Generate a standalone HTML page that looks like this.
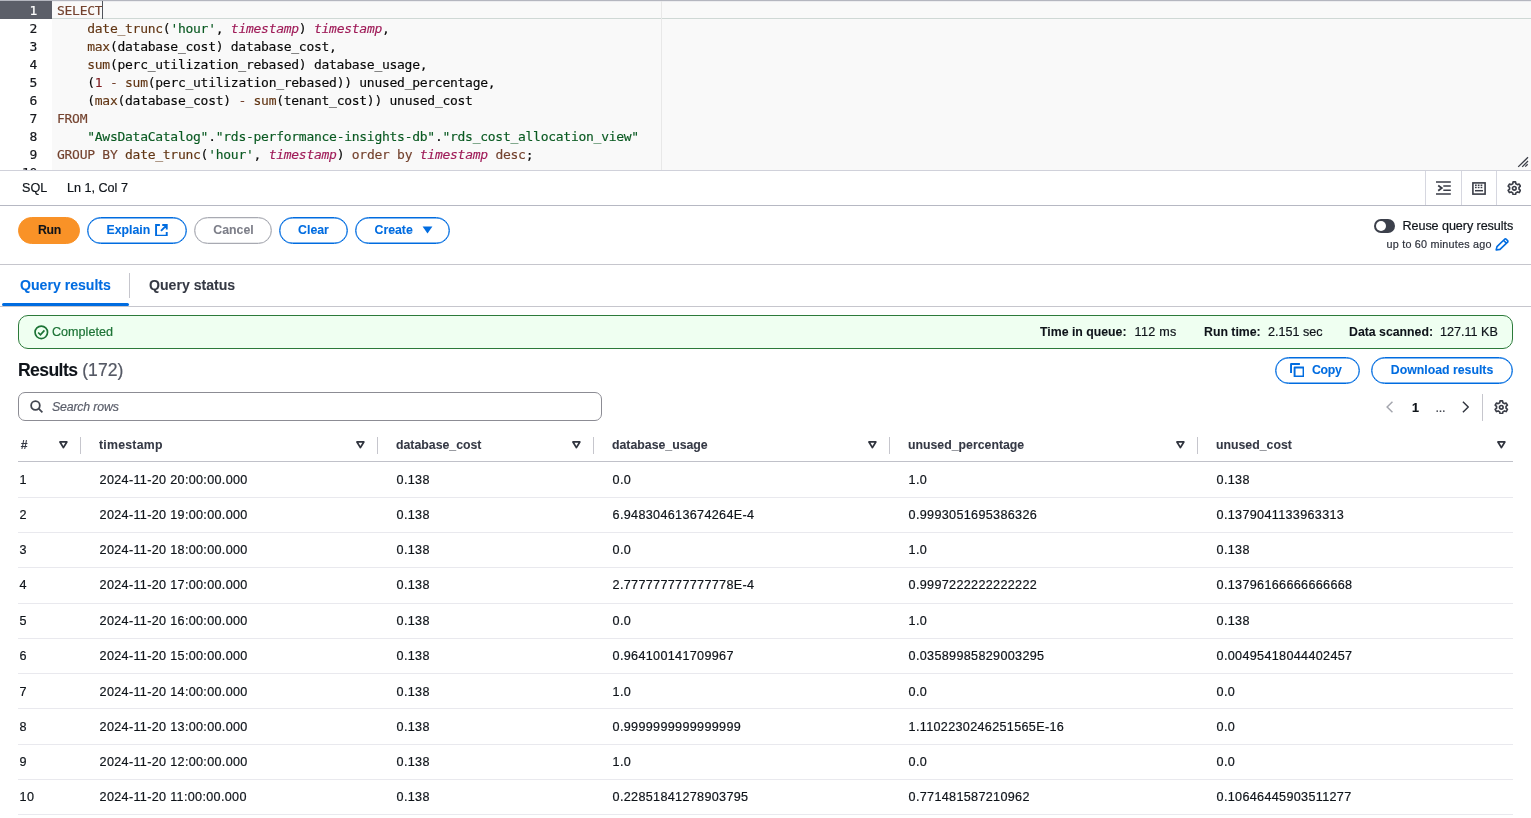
<!DOCTYPE html>
<html lang="en">
<head>
<meta charset="utf-8">
<title>Query editor</title>
<style>
*{box-sizing:border-box;margin:0;padding:0}
html,body{width:1531px;height:818px;overflow:hidden;background:#fff}
body{font-family:"Liberation Sans","DejaVu Sans",sans-serif;font-size:12.6px;line-height:18px;color:#0f141a;position:relative;-webkit-text-stroke:0.2px currentColor}
.abs{position:absolute}
/* editor */
#topline{left:0;top:0;width:1531px;height:1px;background:#b4b6bf}
#editor{left:0;top:1px;width:1531px;height:169px;background:#f9f9f9;overflow:hidden}
#gutter{left:0;top:0;width:52px;height:169px;background:#fff}
#gutter div{height:18px;line-height:20px;text-align:right;padding-right:15px;color:#16181d}
#gutter div.act{background:#5c5f69;color:#fff}
#code,#gutter{font-family:"DejaVu Sans Mono","Liberation Mono",monospace;font-size:13px;letter-spacing:-0.27px;line-height:18px}
#code{-webkit-text-stroke:0.15px currentColor;left:57px;top:1px;white-space:pre;color:#080808}
#code div{height:18px}
#actline{left:52px;top:0;width:1479px;height:18px;border-bottom:1px solid #cfd8d5;border-top:1px solid #ededf0}
#pmargin{left:661px;top:0;width:1px;height:169px;background:#e8e8e8}
#cursor{left:101.6px;top:0;width:1.4px;height:18px;background:#50535b}
.k{color:#74432f}.f{color:#623614}.s{color:#0a5a22}.t{color:#9f1b58;font-style:italic}.n{color:#811f24}
#edborder{left:0;top:170px;width:1531px;height:1px;background:#d0d1da}
/* status bar */
#status{left:0;top:171px;width:1531px;height:34px;background:#fff}
#statborder{left:0;top:205px;width:1531px;height:1px;background:#b6b8c3}
.btn,b,th,.tab{-webkit-text-stroke:0.08px currentColor}
.vsep{width:1px;background:#d6d7e0}
/* buttons */
.btn{position:absolute;height:27px;border-radius:14px;border:1px solid #006ce0;box-shadow:inset 0 0 0 0.4px #006ce0;color:#006ce0;font-weight:bold;font-size:12.3px;line-height:24px;text-align:center;white-space:nowrap;background:#fff}
.btn.primary{background:#f99227;border-color:#f99227;color:#0f141a;box-shadow:none}
.btn.dis{border-color:#a8aab2;color:#7d7f89;box-shadow:inset 0 0 0 0.3px #a8aab2}
#toolborder{left:0;top:264px;width:1531px;height:1px;background:#c6c6cd}
/* tabs */
#tabborder{left:0;top:306px;width:1531px;height:1px;background:#c6c6cd}
.tab{font-weight:bold;font-size:14.1px;line-height:20px}
/* flash */
#flash b{font-size:12.3px}
#flash{left:18px;top:315px;width:1495px;height:34px;border:1px solid #2c7a3a;border-radius:10px;background:#effff1}
/* table */
table{border-collapse:collapse;table-layout:fixed;position:absolute;left:18px;top:427px;width:1495px}
th{color:#353945;height:34px;text-align:left;font-weight:bold;font-size:12.3px;position:relative;border-bottom:1px solid #c0c1c9;padding:2px 0 0 19px;white-space:nowrap}
td{height:35.25px;padding:1px 0 0 19.6px;border-bottom:1px solid #e9e9ee;white-space:nowrap;letter-spacing:0.33px}
tbody tr:first-child td{height:36.25px;padding-top:2px}
th:first-child,td:first-child{padding-left:1.6px}
th:first-child{padding-left:2.8px}
tbody tr:nth-child(3) td,tbody tr:nth-child(4) td{padding-top:0;padding-bottom:1px}
th .sort{position:absolute;right:12px;top:13.9px;width:8.8px;height:7.8px}
th:last-child .sort{right:7.4px}
th .sep{position:absolute;left:0;top:10px;width:1px;height:17px;background:#c6c6cd}
</style>
</head>
<body>
<div id="root" style="position:absolute;left:0;top:0;width:1531px;height:818px;will-change:transform">
<div id="topline" class="abs"></div>
<div id="editor" class="abs">
  <div id="actline" class="abs"></div>
  <div id="pmargin" class="abs"></div>
  <div id="gutter" class="abs"><div class="act">1</div><div>2</div><div>3</div><div>4</div><div>5</div><div>6</div><div>7</div><div>8</div><div>9</div><div>10</div></div>
  <div id="code" class="abs"><div><span class="k">SELECT</span></div><div>    <span class="f">date_trunc</span>(<span class="s">'hour'</span>, <span class="t">timestamp</span>) <span class="t">timestamp</span>,</div><div>    <span class="f">max</span>(database_cost) database_cost,</div><div>    <span class="f">sum</span>(perc_utilization_rebased) database_usage,</div><div>    (<span class="n">1</span> <span class="k">-</span> <span class="f">sum</span>(perc_utilization_rebased)) unused_percentage,</div><div>    (<span class="f">max</span>(database_cost) <span class="k">-</span> <span class="f">sum</span>(tenant_cost)) unused_cost</div><div><span class="k">FROM</span></div><div>    <span class="s">"AwsDataCatalog"</span>.<span class="s">"rds-performance-insights-db"</span>.<span class="s">"rds_cost_allocation_view"</span></div><div><span class="k">GROUP BY</span> <span class="f">date_trunc</span>(<span class="s">'hour'</span>, <span class="t">timestamp</span>) <span class="k">order by</span> <span class="t">timestamp</span> <span class="k">desc</span>;</div><div> </div></div>
  <div id="cursor" class="abs"></div>
  <svg class="abs" style="left:1516px;top:154px" width="13" height="13" viewBox="0 0 13 13"><path d="M2.2 11.9 L12 2.3 M6.2 11.9 L12 6 M9.2 11.6 L11.7 9.2" stroke="#3c3f48" stroke-width="1.3" fill="none"/></svg>
</div>
<div id="edborder" class="abs"></div>

<div id="status" class="abs">
  <span class="abs" style="left:22px;top:8px">SQL</span>
  <span class="abs" style="left:67px;top:8px">Ln 1, Col 7</span>
  <div class="abs vsep" style="left:1425px;top:0;height:34px"></div>
  <div class="abs vsep" style="left:1461px;top:0;height:34px"></div>
  <div class="abs vsep" style="left:1496px;top:0;height:34px"></div>
  <!-- indent icon -->
  <svg class="abs" style="left:1436px;top:10px" width="15" height="14" viewBox="0 0 15 14" fill="none" stroke="#3a3d47" stroke-width="1.5"><path d="M0 0.9H14.8M7.3 4.9H14.8M7.3 9.2H14.8M0 13.1H14.8"/><path d="M2.2 4.4L5.8 7L2.2 9.8" stroke-width="1.8"/></svg>
  <!-- keyboard icon -->
  <svg class="abs" style="left:1472px;top:11px" width="14" height="13" viewBox="0 0 14 13" fill="none" stroke="#3a3d47"><rect x="0.9" y="0.9" width="12.2" height="11.2" stroke-width="1.6"/><path d="M3 8.7H11" stroke-width="1.5"/><path d="M3 3.2H11M3 5.5H11" stroke-width="1.5" stroke-dasharray="1.7 1.1"/></svg>
  <!-- gear icon -->
  <svg class="abs" style="left:1506.8px;top:9.6px" width="14.6" height="14.6" viewBox="0 0 16 16" fill="none" stroke="#3a3d47" stroke-width="1.8" stroke-linejoin="round"><path d="M9.73 2.99 L9.35 1.03 L6.65 1.03 L6.27 2.99 L4.52 4.00 L2.64 3.34 L1.29 5.69 L2.80 6.99 L2.80 9.01 L1.29 10.31 L2.64 12.66 L4.52 12.00 L6.27 13.01 L6.65 14.97 L9.35 14.97 L9.73 13.01 L11.48 12.00 L13.36 12.66 L14.71 10.31 L13.20 9.01 L13.20 6.99 L14.71 5.69 L13.36 3.34 L11.48 4.00z"/><circle cx="8" cy="8" r="2"/></svg>
</div>
<div id="statborder" class="abs"></div>

<!-- toolbar -->
<div class="btn primary" style="left:18px;top:217px;width:62px;letter-spacing:-0.3px;padding-left:1px">Run</div>
<div class="btn" style="left:87px;top:217px;width:100px;text-align:left;padding-left:18.5px">Explain<svg class="abs" style="left:66.9px;top:5.6px" width="12.8" height="12.8" viewBox="0 0 12 12" fill="none" stroke="#006ce0" stroke-width="1.8"><path d="M4.6 1H1v10h10V7.4M6.8 1H11v4.2M11 1L5.6 6.4"/></svg></div>
<div class="btn dis" style="left:194px;top:217px;width:78px;padding-left:1px">Cancel</div>
<div class="btn" style="left:279px;top:217px;width:69px">Clear</div>
<div class="btn" style="left:355px;top:217px;width:95px;text-align:left;padding-left:18.5px">Create<svg class="abs" style="left:66px;top:8.1px" width="11" height="8" viewBox="0 0 11 8"><path d="M0.6 0.6H10.4L5.5 7.4z" fill="#006ce0"/></svg></div>

<div class="abs" style="left:1374px;top:219px;width:21px;height:14px;border-radius:7px;background:#3c404b"><div class="abs" style="left:2px;top:2px;width:10px;height:10px;border-radius:5px;background:#fff"></div></div>
<span class="abs" style="left:1402.5px;top:217px;white-space:nowrap;letter-spacing:-0.07px">Reuse query results</span>
<span class="abs" style="left:1386.6px;top:236px;font-size:10.8px;line-height:16px;color:#2e323c;white-space:nowrap;letter-spacing:0.21px">up to 60 minutes ago</span>
<svg class="abs" style="left:1495px;top:238px" width="14" height="13" viewBox="0 0 14 13" fill="none" stroke="#006ce0" stroke-width="1.6" stroke-linejoin="round"><path d="M1.2 12L2 8.6 9.6 1.2Q10.4.6 11.2 1.2L12.6 2.6Q13.2 3.4 12.6 4.2L5 11.4zM8.6 2.4L11.4 5.2"/></svg>
<div id="toolborder" class="abs"></div>

<!-- tabs -->
<span class="abs tab" style="left:20px;top:275px;color:#006ce0">Query results</span>
<div class="abs" style="left:2px;top:303px;width:127px;height:3px;border-radius:2px;background:#006ce0;z-index:2"></div>
<div class="abs" style="left:129px;top:273px;width:1px;height:25px;background:#c6c6cd"></div>
<span class="abs tab" style="left:149px;top:275px;color:#353944">Query status</span>
<div id="tabborder" class="abs"></div>

<!-- flash -->
<div id="flash" class="abs">
  <svg class="abs" style="left:15.2px;top:9.2px" width="14.6" height="14.6" viewBox="0 0 14 14" fill="none" stroke="#1c7335" stroke-width="1.6"><circle cx="7" cy="7" r="6"/><path d="M4 7.2L6.2 9.4 10 5.2"/></svg>
  <span class="abs" style="left:33px;top:7px;color:#1c7335">Completed</span>
  <span class="abs" style="left:1021px;top:7px;white-space:nowrap"><b>Time in queue:</b></span><span class="abs" style="left:1115.6px;top:7px;white-space:nowrap;letter-spacing:0.25px">112 ms</span>
  <span class="abs" style="left:1185px;top:7px;white-space:nowrap"><b>Run time:</b></span><span class="abs" style="left:1249px;top:7px;white-space:nowrap">2.151 sec</span>
  <span class="abs" style="left:1330px;top:7px;white-space:nowrap"><b>Data scanned:</b></span><span class="abs" style="left:1421px;top:7px;white-space:nowrap">127.11 KB</span>
</div>

<!-- results header -->
<span class="abs" style="left:18px;top:359px;font-size:17.6px;line-height:22px;white-space:nowrap"><b style="letter-spacing:-0.6px">Results</b> <span style="color:#545864">(172)</span></span>
<div class="btn" style="left:1275px;top:357px;width:85px;text-align:left;padding-left:36px;letter-spacing:-0.3px">Copy<svg class="abs" style="left:13.6px;top:4.6px" width="14.6" height="14.6" viewBox="0 0 14 14" fill="none" stroke="#006ce0" stroke-width="1.85" stroke-linejoin="round"><path d="M1 9.5V1H9.5"/><rect x="4.4" y="4.4" width="8.6" height="8.6"/></svg></div>
<div class="btn" style="left:1371px;top:357px;width:142px">Download results</div>

<!-- search -->
<div class="abs" style="left:18px;top:392px;width:584px;height:29px;border:1.4px solid #8c8c94;border-radius:7px;background:#fff">
  <svg class="abs" style="left:10.6px;top:7.4px" width="13.2" height="13.2" viewBox="0 0 14 14" fill="none" stroke="#424650" stroke-width="1.9"><circle cx="5.8" cy="5.8" r="4.6"/><path d="M9.2 9.2L13.2 13.2"/></svg>
  <span class="abs" style="left:33px;top:4.6px;font-style:italic;font-size:12.3px;letter-spacing:-0.15px;color:#5a5e6a;white-space:nowrap">Search rows</span>
</div>

<!-- pagination -->
<svg class="abs" style="left:1386.2px;top:400.9px" width="7.4" height="12" viewBox="0 0 8 13" fill="none" stroke="#a4a6ae" stroke-width="1.6"><path d="M7 0.8L1.2 6.5 7 12.2"/></svg>
<span class="abs" style="left:1412px;top:399px;font-weight:bold">1</span>
<span class="abs" style="left:1435.5px;top:399px;color:#424650;letter-spacing:-0.3px">...</span>
<svg class="abs" style="left:1461.5px;top:400.9px" width="7.4" height="12" viewBox="0 0 8 13" fill="none" stroke="#30343e" stroke-width="1.6"><path d="M1 0.8L6.8 6.5 1 12.2"/></svg>
<div class="abs" style="left:1482px;top:394px;width:1px;height:27px;background:#c6c6cd"></div>
<svg class="abs" style="left:1494px;top:399.8px" width="14.6" height="14.6" viewBox="0 0 16 16" fill="none" stroke="#3a3d47" stroke-width="1.8" stroke-linejoin="round"><path d="M9.73 2.99 L9.35 1.03 L6.65 1.03 L6.27 2.99 L4.52 4.00 L2.64 3.34 L1.29 5.69 L2.80 6.99 L2.80 9.01 L1.29 10.31 L2.64 12.66 L4.52 12.00 L6.27 13.01 L6.65 14.97 L9.35 14.97 L9.73 13.01 L11.48 12.00 L13.36 12.66 L14.71 10.31 L13.20 9.01 L13.20 6.99 L14.71 5.69 L13.36 3.34 L11.48 4.00z"/><circle cx="8" cy="8" r="2"/></svg>

<!-- table -->
<table>
<colgroup><col style="width:62px"><col style="width:297px"><col style="width:216px"><col style="width:296px"><col style="width:308px"><col style="width:316px"></colgroup>
<thead><tr>
<th>#<svg class="sort" viewBox="0 0 9 8"><path d="M1 1H8L4.5 6.8z" fill="none" stroke="#30343e" stroke-width="1.8" stroke-linejoin="round"/></svg></th>
<th style="letter-spacing:0.25px"><i class="sep"></i>timestamp<svg class="sort" viewBox="0 0 9 8"><path d="M1 1H8L4.5 6.8z" fill="none" stroke="#30343e" stroke-width="1.8" stroke-linejoin="round"/></svg></th>
<th><i class="sep"></i>database_cost<svg class="sort" viewBox="0 0 9 8"><path d="M1 1H8L4.5 6.8z" fill="none" stroke="#30343e" stroke-width="1.8" stroke-linejoin="round"/></svg></th>
<th><i class="sep"></i>database_usage<svg class="sort" viewBox="0 0 9 8"><path d="M1 1H8L4.5 6.8z" fill="none" stroke="#30343e" stroke-width="1.8" stroke-linejoin="round"/></svg></th>
<th><i class="sep"></i>unused_percentage<svg class="sort" viewBox="0 0 9 8"><path d="M1 1H8L4.5 6.8z" fill="none" stroke="#30343e" stroke-width="1.8" stroke-linejoin="round"/></svg></th>
<th><i class="sep"></i>unused_cost<svg class="sort" viewBox="0 0 9 8"><path d="M1 1H8L4.5 6.8z" fill="none" stroke="#30343e" stroke-width="1.8" stroke-linejoin="round"/></svg></th>
</tr></thead>
<tbody>
<tr><td>1</td><td>2024-11-20 20:00:00.000</td><td>0.138</td><td>0.0</td><td>1.0</td><td>0.138</td></tr>
<tr><td>2</td><td>2024-11-20 19:00:00.000</td><td>0.138</td><td>6.948304613674264E-4</td><td>0.9993051695386326</td><td>0.1379041133963313</td></tr>
<tr><td>3</td><td>2024-11-20 18:00:00.000</td><td>0.138</td><td>0.0</td><td>1.0</td><td>0.138</td></tr>
<tr><td>4</td><td>2024-11-20 17:00:00.000</td><td>0.138</td><td>2.777777777777778E-4</td><td>0.9997222222222222</td><td>0.13796166666666668</td></tr>
<tr><td>5</td><td>2024-11-20 16:00:00.000</td><td>0.138</td><td>0.0</td><td>1.0</td><td>0.138</td></tr>
<tr><td>6</td><td>2024-11-20 15:00:00.000</td><td>0.138</td><td>0.964100141709967</td><td>0.03589985829003295</td><td>0.00495418044402457</td></tr>
<tr><td>7</td><td>2024-11-20 14:00:00.000</td><td>0.138</td><td>1.0</td><td>0.0</td><td>0.0</td></tr>
<tr><td>8</td><td>2024-11-20 13:00:00.000</td><td>0.138</td><td>0.9999999999999999</td><td>1.1102230246251565E-16</td><td>0.0</td></tr>
<tr><td>9</td><td>2024-11-20 12:00:00.000</td><td>0.138</td><td>1.0</td><td>0.0</td><td>0.0</td></tr>
<tr><td>10</td><td>2024-11-20 11:00:00.000</td><td>0.138</td><td>0.22851841278903795</td><td>0.771481587210962</td><td>0.10646445903511277</td></tr>
</tbody>
</table>
</div>
</body>
</html>
